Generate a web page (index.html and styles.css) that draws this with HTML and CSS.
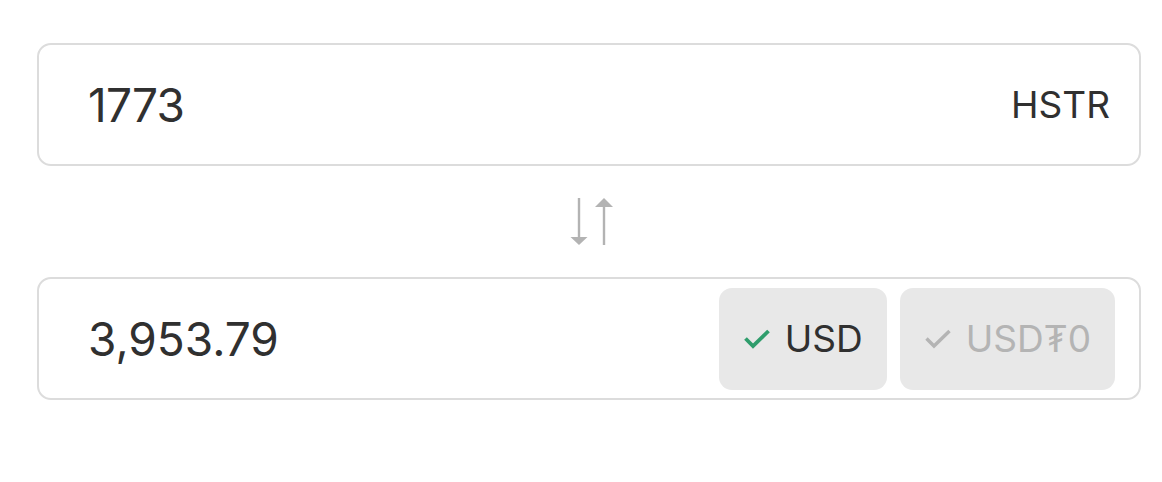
FILE: index.html
```html
<!DOCTYPE html>
<html lang="en">
<head>
    <meta charset="UTF-8">
    <meta name="viewport" content="width=device-width, initial-scale=1.0">
    <title>Convert</title>
    <link rel="stylesheet" href="styles.css">
</head>
<body>
    <div class="converter">
        <div class="field">
            <span class="amount">1773</span>
            <span class="unit">HSTR</span>
        </div>

        <div class="swap">
            <svg width="46" height="52" viewBox="0 0 46 52" fill="none">
                <!-- down arrow -->
                <line x1="12" y1="2" x2="12" y2="42" stroke="#b3b3b3" stroke-width="2.4"/>
                <path d="M3.5 41 L20.5 41 L12 49 Z" fill="#b3b3b3"/>
                <!-- up arrow -->
                <line x1="37" y1="10" x2="37" y2="49" stroke="#b3b3b3" stroke-width="2.4"/>
                <path d="M28 11 L46 11 L37 2 Z" fill="#b3b3b3"/>
            </svg>
        </div>

        <div class="field field-result">
            <span class="amount result">3,953.79</span>
            <div class="options">
                <button type="button" class="option active">
                    <svg width="28" height="22" viewBox="0 0 28 22"><path d="M2.5 10.5 L10 18 L25.5 3" stroke="#2f9d6c" stroke-width="3.8" fill="none"/></svg>
                    USD
                </button>
                <button type="button" class="option">
                    <svg width="28" height="22" viewBox="0 0 28 22"><path d="M2.5 10.5 L10 18 L25.5 3" stroke="#b4b4b4" stroke-width="3.4" fill="none"/></svg>
                    USD₮0
                </button>
            </div>
        </div>
    </div>
</body>
</html>
```

FILE: styles.css
```css
body {
    font-family: Inter, "Noto Sans", sans-serif;
    margin: 0;
    padding: 43px 21px 0 37px;
    background: #fff;
    color: #303030;
}
.converter {
    width: 1104px;
}
.field {
    display: flex;
    align-items: center;
    justify-content: space-between;
    height: 123px;
    box-sizing: border-box;
    border: 2px solid #dcdcdc;
    border-radius: 14px;
    padding: 0 29px 0 49px;
}
.amount {
    font-size: 46px;
    letter-spacing: -0.8px;
}
.amount.result {
    letter-spacing: 0;
}
.unit {
    font-size: 37px;
}
.swap {
    display: flex;
    justify-content: center;
    align-items: center;
    height: 111px;
}
.swap svg {
    margin-left: 2px;
}
.field-result {
    padding-right: 24px;
}
.options {
    display: flex;
    gap: 13px;
}
.option {
    display: flex;
    align-items: center;
    gap: 14px;
    height: 102px;
    padding: 0 24px;
    border: none;
    border-radius: 13px;
    background: #e8e8e8;
    font-family: Inter, "Noto Sans", sans-serif;
    font-size: 37px;
    color: #303030;
}
.option + .option {
    color: #b4b4b4;
}
```
